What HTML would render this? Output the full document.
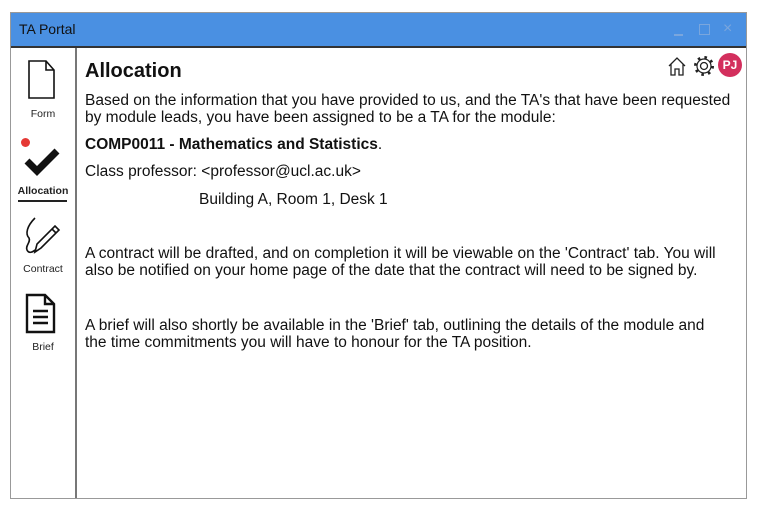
<!DOCTYPE html>
<html><head><meta charset="utf-8"><style>
body{margin:0;width:760px;height:516px;background:#fff;font-family:"Liberation Sans",sans-serif;position:relative;overflow:hidden}
.win{position:absolute;left:10px;top:12px;width:735px;height:485px;border:1px solid #999;background:#fff}
.title{position:absolute;left:0;top:0;width:735px;height:33px;background:#4a90e2;border-bottom:2px solid #333;}
.title span{position:absolute;left:8px;top:8px;font-size:14px;color:#111}
.side{position:absolute;left:64px;top:35px;width:2px;height:450px;background:#777}
.lbl{position:absolute;width:64px;left:0;text-align:center;font-size:10.5px;color:#222}
.c{position:absolute;left:74px;font-size:15.5px;color:#111;line-height:17px;white-space:nowrap}
</style></head><body>
<div class="win">
<div class="title"><span>TA Portal</span>
<div style="position:absolute;left:663px;top:21px;width:9px;height:1.5px;background:#7aa6dd"></div>
<div style="position:absolute;left:688px;top:11px;width:9px;height:9px;border:1.5px solid #7aa6dd"></div>
<div style="position:absolute;left:712px;top:7px;color:#7aa6dd;font-size:16px">×</div>
</div>
<div class="side"></div>
<svg style="position:absolute;left:16px;top:47px" width="30" height="40"><path d="M2 1H19L27 10V38H2Z M19 1V10H27" fill="none" stroke="#111" stroke-width="1.6"/></svg>
<div class="lbl" style="top:95px">Form</div>
<div style="position:absolute;left:10px;top:125px;width:9px;height:9px;border-radius:50%;background:#e53935"></div>
<svg style="position:absolute;left:12px;top:132px" width="38" height="34"><path d="M4 16L14 26L34 6" fill="none" stroke="#111" stroke-width="7"/></svg>
<div class="lbl" style="top:172px;font-weight:bold">Allocation</div>
<div style="position:absolute;left:7px;top:187px;width:49px;height:1.5px;background:#222"></div>
<svg style="position:absolute;left:10px;top:203px" width="42" height="44"><path d="M14 2C6 10 4 18 8 22C10 26 4 30 6 34C8 38 12 36 14 34M14 36L16 28L34 10L38 14L20 32Z M31 13L35 17" fill="none" stroke="#111" stroke-width="1.6"/></svg>
<div class="lbl" style="top:250px">Contract</div>
<svg style="position:absolute;left:14px;top:280px" width="32" height="42"><path d="M2 2H20L29 11V39H2Z M20 2V11H29 M8 18H23M8 24H23M8 30H23" fill="none" stroke="#111" stroke-width="2.4"/></svg>
<div class="lbl" style="top:328px">Brief</div>
<div class="c" style="top:46px;font-size:20px;font-weight:bold;line-height:24px">Allocation</div>
<svg style="position:absolute;left:656px;top:42px" width="20" height="22"><path d="M2 11L10 3L18 11M4 9V20H8V14H12V20H16V9" fill="none" stroke="#222" stroke-width="1.3"/></svg>
<svg style="position:absolute;left:681px;top:41px" width="24" height="24"><circle cx="12" cy="12" r="4" fill="none" stroke="#222" stroke-width="1.3"/><circle cx="12" cy="12" r="8.5" fill="none" stroke="#222" stroke-width="3" stroke-dasharray="2.5 4.2"/><circle cx="12" cy="12" r="7" fill="#fff" stroke="#222" stroke-width="1.2"/><circle cx="12" cy="12" r="3.5" fill="none" stroke="#222" stroke-width="1.3"/></svg>
<div style="position:absolute;left:707px;top:40px;width:24px;height:24px;border-radius:50%;background:#d32f5d;color:#fff;font-weight:bold;font-size:12px;text-align:center;line-height:24px">PJ</div>
<div class="c" style="top:79px">Based on the information that you have provided to us, and the TA's that have been requested<br>by module leads, you have been assigned to be a TA for the module:</div>
<div class="c" style="top:123px"><b>COMP0011 - Mathematics and Statistics</b>.</div>
<div class="c" style="top:150px">Class professor: &lt;professor@ucl.ac.uk&gt;</div>
<div class="c" style="top:178px;left:188px">Building A, Room 1, Desk 1</div>
<div class="c" style="top:232px">A contract will be drafted, and on completion it will be viewable on the 'Contract' tab. You will<br>also be notified on your home page of the date that the contract will need to be signed by.</div>
<div class="c" style="top:304px">A brief will also shortly be available in the 'Brief' tab, outlining the details of the module and<br>the time commitments you will have to honour for the TA position.</div>
</div>
</body></html>
